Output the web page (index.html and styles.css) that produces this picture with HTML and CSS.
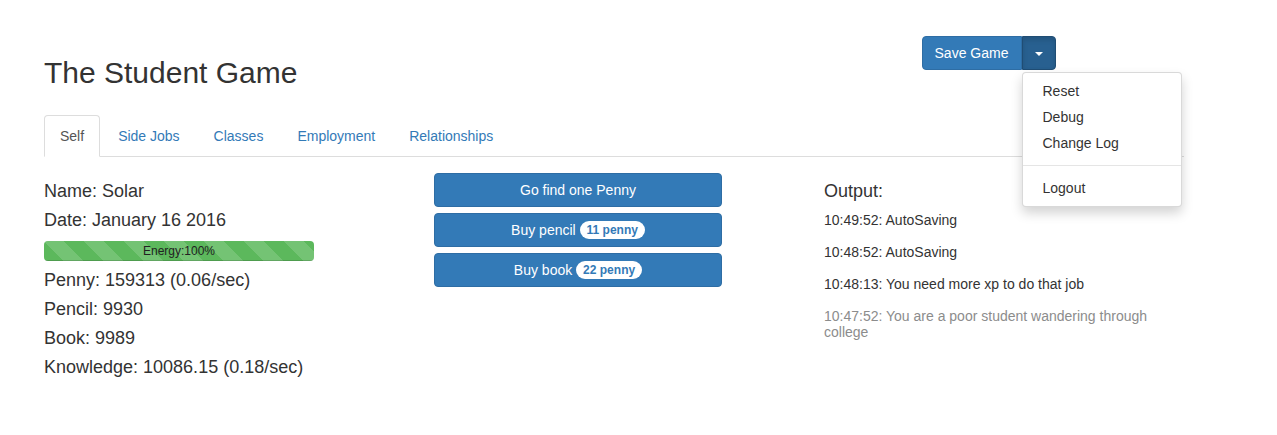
FILE: index.html
```html
<!DOCTYPE html>
<html lang="en">
<head>
<meta charset="utf-8">
<title>The Student Game</title>
<link rel="stylesheet" href="styles.css">
</head>
<body>
<div class="container">
  <div class="header">
    <h2 class="title">The Student Game</h2>
    <div class="btn-group">
      <button class="btn btn-primary btn-first">Save Game</button>
      <button class="btn btn-primary btn-toggle"><span class="caret"></span></button>
      <ul class="dropdown-menu">
        <li><a>Reset</a></li>
        <li><a>Debug</a></li>
        <li><a>Change Log</a></li>
        <li class="divider"></li>
        <li><a>Logout</a></li>
      </ul>
    </div>
  </div>

  <ul class="nav-tabs">
    <li class="active"><a>Self</a></li>
    <li><a>Side Jobs</a></li>
    <li><a>Classes</a></li>
    <li><a>Employment</a></li>
    <li><a>Relationships</a></li>
  </ul>

  <div class="content">
    <div class="col col-stats">
      <div class="stat">Name: Solar</div>
      <div class="stat">Date: January 16 2016</div>
      <div class="progress"><div class="progress-bar" style="width:100%">Energy:100%</div></div>
      <div class="stat">Penny: 159313 (0.06/sec)</div>
      <div class="stat">Pencil: 9930</div>
      <div class="stat">Book: 9989</div>
      <div class="stat">Knowledge: 10086.15 (0.18/sec)</div>
    </div>
    <div class="col col-actions">
      <button class="btn btn-primary btn-action">Go find one Penny</button>
      <button class="btn btn-primary btn-action">Buy pencil <span class="badge">11 penny</span></button>
      <button class="btn btn-primary btn-action">Buy book <span class="badge">22 penny</span></button>
    </div>
    <div class="col col-output">
      <div class="stat">Output:</div>
      <div class="log">
        <p>10:49:52: AutoSaving</p>
        <p>10:48:52: AutoSaving</p>
        <p>10:48:13: You need more xp to do that job</p>
        <p class="old">10:47:52: You are a poor student wandering through college</p>
      </div>
    </div>
  </div>
</div>
</body>
</html>
```

FILE: styles.css
```css
* { box-sizing: border-box; }
body {
  margin: 0;
  font-family: "Liberation Sans", Arial, Helvetica, sans-serif;
  font-size: 14px;
  line-height: 20px;
  color: #333;
  background: #fff;
}
.container {
  width: 1170px;
  margin-left: 29px;
  padding: 36px 15px 0;
}
.header {
  display: grid;
  grid-template-columns: 1fr 262.5px;
  column-gap: 30px;
  align-items: start;
}
.title {
  margin: 20px 0 10px;
  font-size: 30px;
  line-height: 33px;
  font-weight: 500;
  color: #333;
}
.btn-group {
  position: relative;
  display: flex;
}
.btn {
  font-family: inherit;
  font-size: 14px;
  line-height: 20px;
  padding: 6px 12px;
  border: 1px solid transparent;
  border-radius: 4px;
  cursor: pointer;
  white-space: nowrap;
}
.btn-primary {
  color: #fff;
  background-color: #337ab7;
  border-color: #2e6da4;
}
.btn-first {
  width: 100px;
  border-radius: 4px 0 0 4px;
}
.btn-toggle {
  border-radius: 0 4px 4px 0;
  background-color: #286090;
  border-color: #204d74;
  box-shadow: inset 0 3px 5px rgba(0,0,0,.125);
  display: flex;
  align-items: center;
  justify-content: center;
  width: 34px;
  height: 34px;
  padding: 0;
}
.caret {
  display: inline-block;
  width: 0;
  height: 0;
  border-top: 4px solid #fff;
  border-left: 4px solid transparent;
  border-right: 4px solid transparent;
  margin-top: 1px;
}
.dropdown-menu {
  position: absolute;
  top: 36px;
  left: 100px;
  width: 160px;
  margin: 0;
  padding: 5px 0;
  list-style: none;
  background: #fff;
  border: 1px solid rgba(0,0,0,.15);
  border-radius: 4px;
  box-shadow: 0 6px 12px rgba(0,0,0,.175);
  z-index: 10;
}
.dropdown-menu a {
  display: block;
  padding: 3px 20px;
  line-height: 20px;
  color: #333;
}
.dropdown-menu .divider {
  height: 1px;
  margin: 9px 0;
  background: #e5e5e5;
}
.nav-tabs {
  display: flex;
  list-style: none;
  margin: 16px 0 0;
  padding: 0;
  border-bottom: 1px solid #ddd;
}
.nav-tabs li {
  margin-bottom: -1px;
  margin-right: 2px;
}
.nav-tabs a {
  display: block;
  padding: 10px 15px;
  line-height: 20px;
  border: 1px solid transparent;
  border-radius: 4px 4px 0 0;
  color: #337ab7;
}
.nav-tabs .active a {
  color: #555;
  background: #fff;
  border-color: #ddd #ddd transparent;
}
.content {
  display: grid;
  grid-template-columns: repeat(3, 1fr);
  column-gap: 30px;
  margin-top: 16px;
}
.col-stats, .col-output {
  padding-top: 4px;
}
.stat {
  font-size: 18px;
  line-height: 29px;
}
.progress {
  width: 75%;
  height: 20px;
  margin: 6px 0 5px;
  background: #f5f5f5;
  border-radius: 4px;
  overflow: hidden;
}
.progress-bar {
  height: 20px;
  font-size: 12px;
  line-height: 20px;
  text-align: center;
  color: #222;
  background-color: #5cb85c;
  background-image: linear-gradient(45deg, rgba(255,255,255,.15) 25%, transparent 25%, transparent 50%, rgba(255,255,255,.15) 50%, rgba(255,255,255,.15) 75%, transparent 75%, transparent);
  background-size: 40px 40px;
  box-shadow: inset 0 -1px 0 rgba(0,0,0,.15);
}
.col-actions {
  display: flex;
  flex-direction: column;
  gap: 6px;
}
.btn-action {
  width: 80%;
  height: 34px;
  text-align: center;
}
.badge {
  display: inline-block;
  position: relative;
  top: -1px;
  padding: 3px 7px;
  font-size: 12px;
  font-weight: bold;
  line-height: 1;
  color: #337ab7;
  background: #fff;
  border-radius: 10px;
  vertical-align: middle;
}
.log {
  margin-top: 6px;
}
.log p {
  margin: 0 0 16px;
  line-height: 16px;
  font-size: 14px;
}
.log p.old {
  color: #8c8c8c;
}
```
